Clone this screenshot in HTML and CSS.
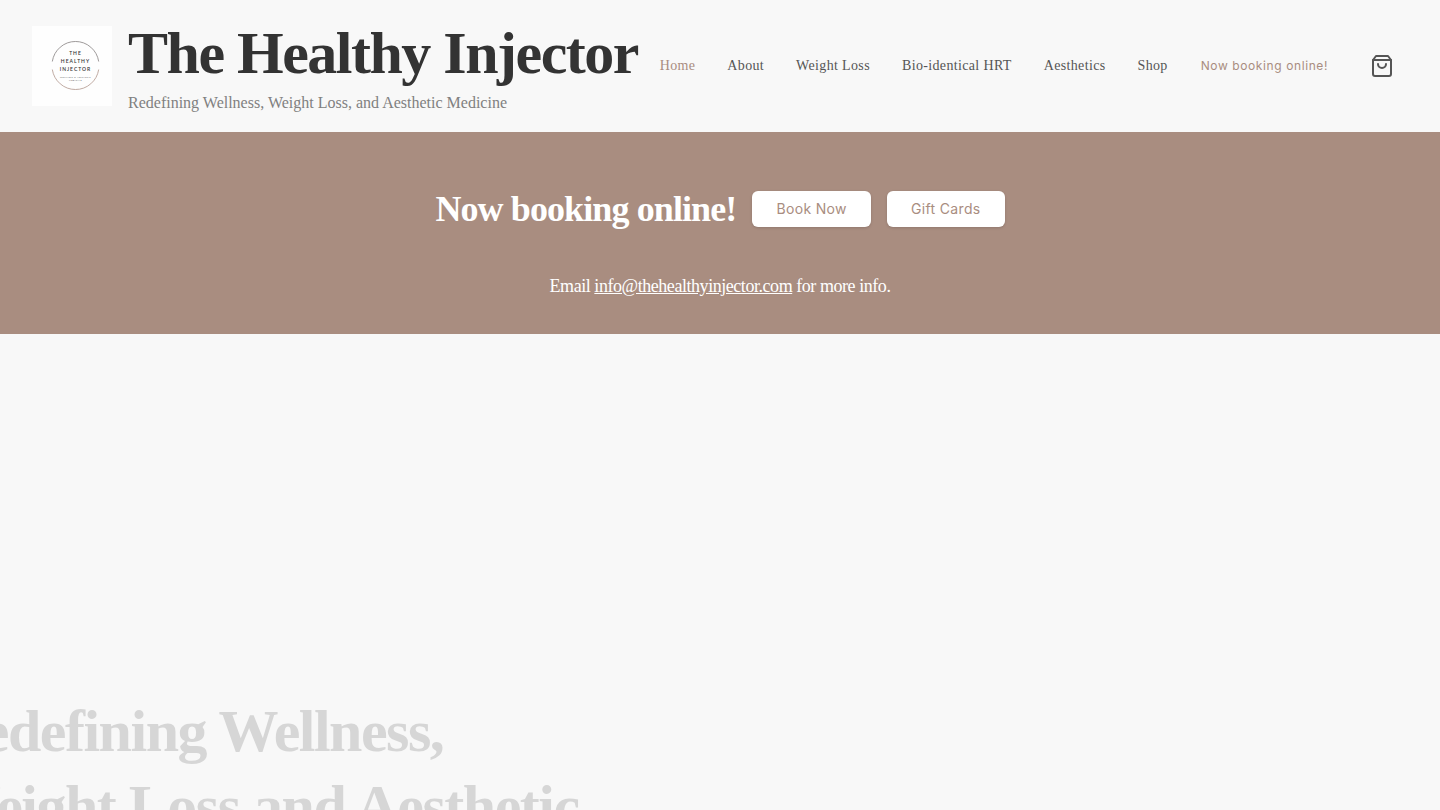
FILE: index.html
```html
<!DOCTYPE html>
<html lang="en">
<head>
  <meta charset="UTF-8">
  <meta name="viewport" content="width=device-width, initial-scale=1.0">
  <title>The Healthy Injector</title>
  <link rel="stylesheet" href="styles.css">
</head>
<body>
  <header class="header">
    <a class="brand" href="#">
      <svg class="logo" viewBox="0 0 80 80" aria-hidden="true">
        <rect width="80" height="80" fill="#fefefe"/>
        <g fill="none" stroke-width="0.8">
          <path d="M20.3 35.5A23.5 23.8 0 0 1 66.7 35.5" stroke="#858080"/>
          <path d="M20.3 43.5A23.5 23.8 0 0 0 66.7 43.5" stroke="#b0958c"/>
        </g>
        <g class="logo-name">
          <text x="43.5" y="29.4">THE</text>
          <text x="43.5" y="37.4">HEALTHY</text>
          <text x="43.5" y="45.4">INJECTOR</text>
        </g>
        <g class="logo-sub">
          <text x="43.5" y="51.7">WELLNESS &amp; AESTHETIC</text>
          <text x="43.5" y="54.9">MEDICINE</text>
        </g>
      </svg>
      <div>
        <h1 class="title">The Healthy Injector</h1>
        <p class="tagline">Redefining Wellness, Weight Loss, and Aesthetic Medicine</p>
      </div>
    </a>
    <div class="menu">
      <nav class="nav">
        <a class="active" href="#">Home</a>
        <a href="#">About</a>
        <a href="#">Weight Loss</a>
        <a href="#">Bio-identical HRT</a>
        <a href="#">Aesthetics</a>
        <a href="#">Shop</a>
      </nav>
      <a class="book-link" href="#">Now booking online!</a>
      <button class="cart" type="button" aria-label="Cart">
        <svg width="24" height="24" viewBox="0 0 24 24" fill="none" stroke="currentColor" stroke-width="2" stroke-linecap="round" stroke-linejoin="round">
          <path d="M6 2L3 6v14a2 2 0 0 0 2 2h14a2 2 0 0 0 2-2V6l-3-4z"/>
          <path d="M3 6h18"/>
          <path d="M16 10a4 4 0 0 1-8 0"/>
        </svg>
      </button>
    </div>
  </header>
  <section class="banner">
    <div class="banner-row">
      <h2>Now booking online!</h2>
      <button class="btn" type="button">Book Now</button>
      <button class="btn" type="button">Gift Cards</button>
    </div>
    <p class="contact">Email <a href="mailto:info@thehealthyinjector.com">info@thehealthyinjector.com</a> for more info.</p>
  </section>
  <section class="hero">
    <h2 class="hero-title">Redefining Wellness,<br>Weight Loss and Aesthetic</h2>
  </section>
</body>
</html>
```

FILE: styles.css
```css
* { box-sizing: border-box; margin: 0; padding: 0; }
body { display: flex; flex-direction: column; height: 100vh; background: #f8f8f8; color: #333; font-family: "Liberation Serif", "Times New Roman", serif; }
a { color: inherit; text-decoration: none; }
button { border: none; cursor: pointer; }

.header { display: flex; align-items: center; justify-content: space-between; padding: 16px 32px 17px; }
.brand { display: flex; align-items: center; gap: 16px; }
.logo { width: 80px; height: 80px; }
.logo-name { font: 600 5px Lato, sans-serif; letter-spacing: 0.2em; text-anchor: middle; fill: #333; }
.logo-sub { font: 400 2px Lato, sans-serif; letter-spacing: 0.2em; text-anchor: middle; fill: #555; }
.title, .hero-title { font-size: 60px; line-height: 75px; letter-spacing: -0.025em; white-space: nowrap; }
.tagline { font-size: 16px; line-height: 24px; color: #808080; }

.menu { display: flex; align-items: center; white-space: nowrap; }
.nav { display: flex; gap: 32px; font-size: 14px; line-height: 20px; letter-spacing: 0.025em; color: #555; }
.nav .active { color: #a98d80; }
.book-link { margin-left: 33px; font: 400 12px/20px Inter, sans-serif; letter-spacing: 0.05em; color: #a98d80; }
.cart { display: flex; margin: 0 6px 0 34px; padding: 8px; background: none; color: #555; }

.banner { display: flex; flex-direction: column; align-items: center; gap: 40px; padding: 54px 32px 34px; background: #a98d80; color: #fff; }
.banner-row { display: flex; align-items: center; gap: 16px; }
.banner h2 { font-size: 36px; line-height: 46px; letter-spacing: -0.025em; }
.btn { padding: 8px 24px; border-radius: 6px; background: #fff; color: #a98d80; font: 400 14px/20px Inter, sans-serif; letter-spacing: 0.025em; box-shadow: 0 1px 3px rgba(0, 0, 0, 0.15); }
.contact { font-size: 18px; line-height: 28px; letter-spacing: -0.025em; }
.contact a { text-decoration: underline; }

.hero { flex: 1; min-height: 0; overflow: hidden; padding: 360px 32px 0; }
.hero-title { transform: translateX(-91px); opacity: 0.17; }
```
